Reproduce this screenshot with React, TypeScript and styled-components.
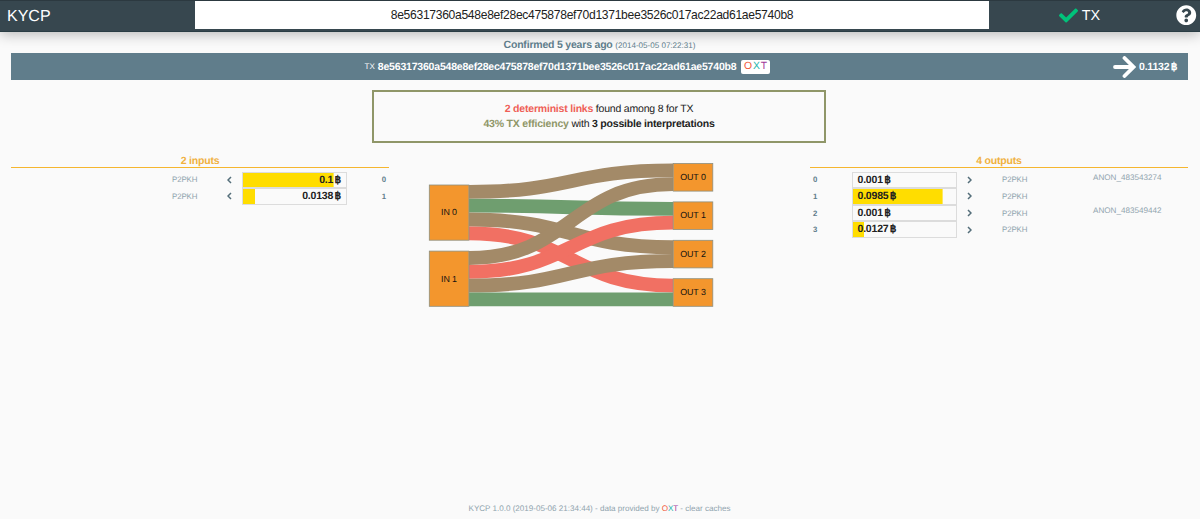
import styled, { createGlobalStyle } from "styled-components";
import { FaCheck, FaQuestionCircle } from "react-icons/fa";

const GlobalStyle = createGlobalStyle`
  * {
    box-sizing: border-box;
  }
  body {
    margin: 0;
    background-color: #fafafa;
    color: #212121;
    font-family: "Liberation Sans", Arial, sans-serif;
    font-size: 10.5px;
    letter-spacing: -0.2px;
    text-rendering: geometricPrecision;
  }
`;

const Page = styled.div`
  height: 519px;
  display: flex;
  flex-direction: column;
`;

const Header = styled.header`
  height: 32px;
  flex-shrink: 0;
  display: grid;
  grid-template-columns: 195px 794px 181px 1fr;
  background-color: #37474f;
  border-top: 1px solid #2c3940;
  border-bottom: 1px solid #2a3d44;
  box-shadow: 0 2px 14px rgba(0, 0, 0, 0.28);
  color: #fff;
  letter-spacing: 0;
`;

const Brand = styled.h1`
  margin: 0;
  padding-left: 7px;
  font-size: 16px;
  font-weight: 400;
  line-height: 31px;
`;

const Search = styled.input`
  width: 100%;
  height: 28px;
  padding: 0;
  border: 0;
  background-color: #fff;
  color: #212121;
  font-family: inherit;
  font-size: 12.1px;
  letter-spacing: -0.3px;
  text-align: center;
  outline: none;
`;

const Kind = styled.div`
  height: 29px;
  display: flex;
  align-items: center;
  justify-content: center;
  gap: 4px;
  font-size: 14.4px;
  svg {
    color: #00c27a;
    font-size: 19px;
  }
`;

const Help = styled.div`
  height: 28px;
  display: flex;
  align-items: center;
  padding-left: 6px;
  font-size: 20.5px;
`;

const Main = styled.main`
  flex: 1;
  padding: 6px 12px 0 11px;
`;

const Confirmed = styled.div`
  height: 15px;
  line-height: 15px;
  text-align: center;
  color: #607d8b;
  font-weight: 700;
  small {
    font-size: 8.1px;
    font-weight: 400;
    letter-spacing: -0.02px;
  }
`;

const TxBar = styled.div`
  height: 27px;
  display: grid;
  grid-template-columns: 11px 1fr 75px;
  align-items: center;
  background-color: #607d8b;
  color: #fff;
`;

const TxId = styled.div`
  grid-column: 2;
  display: flex;
  align-items: center;
  justify-content: center;
  height: 26px;
  font-weight: 700;
  small {
    margin-right: 3px;
    font-size: 8px;
    font-weight: 400;
    letter-spacing: 0;
  }
`;

const OxtBadge = styled.span`
  width: 29px;
  height: 14px;
  margin-left: 5px;
  border-radius: 2px;
  background-color: #fff;
  font-size: 10.4px;
  font-weight: 400;
  letter-spacing: 0.8px;
  line-height: 14px;
  text-align: center;
`;

const Letter = styled.span<{ $color: string }>`
  color: ${(props) => props.$color};
`;

const TxAmount = styled.div`
  display: flex;
  align-items: center;
  gap: 3px;
  font-weight: 700;
`;

const Coin = styled.span`
  margin-left: 1.4px;
`;

const Summary = styled.section`
  width: 454px;
  height: 53px;
  margin: 10px 0 0 361px;
  padding-top: 10px;
  border: 2px solid #8f9668;
  text-align: center;
  line-height: 15px;
`;

const Strong = styled.strong<{ $color?: string }>`
  color: ${(props) => props.$color || "inherit"};
`;

const Columns = styled.div`
  display: grid;
  grid-template-columns: 378px 421px 378px;
  margin-top: 11px;
`;

const ListTitle = styled.h2`
  height: 14px;
  margin: 0 0 3.6px;
  border-bottom: 1px solid #f5b62f;
  color: #f0b13f;
  font-size: 10.5px;
  font-weight: 700;
  line-height: 15px;
  text-align: center;
`;

const InputRow = styled.div`
  height: 16.6px;
  display: grid;
  grid-template-columns: 161px 55px 15px 105px 1fr;
  align-items: center;
`;

const OutputRow = styled.div`
  height: 16.6px;
  display: grid;
  grid-template-columns: 42px 105px 45px 91px 1fr;
  align-items: center;
`;

const Index = styled.span<{ $right?: boolean }>`
  padding: 0 3px;
  color: #607d8b;
  font-size: 7.8px;
  font-weight: 700;
  letter-spacing: 0;
  text-align: ${(props) => (props.$right ? "right" : "left")};
`;

const Muted = styled.span`
  color: #90a4ae;
  font-size: 7.9px;
  letter-spacing: -0.12px;
`;

const Address = styled(Muted)`
  padding-bottom: 5px;
  font-size: 8.1px;
  letter-spacing: 0;
`;

const Amount = styled.div<{ $right?: boolean }>`
  height: 16.6px;
  padding: 0 5px 0 4.5px;
  border: 1px solid #dcdcdc;
  background: linear-gradient(#ffdd00, #ffdd00) no-repeat;
  font-weight: 700;
  line-height: 15px;
  text-align: ${(props) => (props.$right ? "right" : "left")};
`;

const Chevron = styled.svg<{ $offset?: number }>`
  width: 5px;
  height: 8px;
  margin-left: ${(props) => props.$offset || 0}px;
  fill: none;
  stroke: #546e7a;
  stroke-width: 1.5;
`;

const Links = styled.svg`
  display: block;
  width: 421px;
  height: 160px;
  text {
    font-size: 8.9px;
    letter-spacing: -0.1px;
    text-anchor: middle;
    fill: #111;
  }
`;

const Footer = styled.footer`
  height: 22px;
  padding-right: 1px;
  color: #90a4ae;
  font-size: 8.1px;
  letter-spacing: -0.02px;
  line-height: 23px;
  text-align: center;
`;

const BROWN = "#a38a68";
const GREEN = "#6f9e6f";
const RED = "#f17063";

const inputs = [
  { amount: "0.1", ratio: 0.88 },
  { amount: "0.0138", ratio: 0.12 },
];

const outputs = [
  { amount: "0.001", ratio: 0, address: "ANON_483543274" },
  { amount: "0.0985", ratio: 0.87 },
  { amount: "0.001", ratio: 0, address: "ANON_483549442" },
  { amount: "0.0127", ratio: 0.11 },
];

// one row per input, one colour per output
const matrix = [
  [BROWN, GREEN, BROWN, RED],
  [BROWN, RED, BROWN, GREEN],
];

const LINK = 13.8;
const inY = (i: number) => 31 + i * 66.1;
const outY = (i: number) => 9.5 + i * 38.4;

function Oxt() {
  return (
    <>
      <Letter $color="#f1593a">O</Letter>
      <Letter $color="#1fb5ad">X</Letter>
      <Letter $color="#a23a9b">T</Letter>
    </>
  );
}

function Sankey() {
  return (
    <Links viewBox="0 0 421 160">
      {matrix.map((row, i) =>
        row.map((color, o) => {
          const y0 = inY(i) + LINK * (o + 0.5);
          const y1 = outY(o) + LINK * (i + 0.5);
          return (
            <path
              key={`${i}-${o}`}
              d={`M80,${y0}C182,${y0} 182,${y1} 284,${y1}`}
              fill="none"
              stroke={color}
              strokeWidth={LINK}
            />
          );
        })
      )}
      {matrix.map((_, i) => (
        <g key={i}>
          <rect
            x={40.3}
            y={inY(i)}
            width={39.6}
            height={LINK * 4}
            fill="#f3962d"
            stroke="#8c8f80"
            strokeWidth={0.8}
          />
          <text x={60} y={inY(i) + 30.4}>
            IN {i}
          </text>
        </g>
      ))}
      {outputs.map((_, i) => (
        <g key={i}>
          <rect
            x={284.2}
            y={outY(i)}
            width={39.6}
            height={LINK * 2}
            fill="#f3962d"
            stroke="#8c8f80"
            strokeWidth={0.8}
          />
          <text x={304} y={outY(i) + 16.5}>
            OUT {i}
          </text>
        </g>
      ))}
    </Links>
  );
}

export default function App() {
  return (
    <Page>
      <GlobalStyle />
      <Header>
        <Brand>KYCP</Brand>
        <Search
          readOnly
          value="8e56317360a548e8ef28ec475878ef70d1371bee3526c017ac22ad61ae5740b8"
        />
        <Kind>
          <FaCheck />
          TX
        </Kind>
        <Help>
          <FaQuestionCircle />
        </Help>
      </Header>
      <Main>
        <Confirmed>
          Confirmed 5 years ago <small>(2014-05-05 07:22:31)</small>
        </Confirmed>
        <TxBar>
          <TxId>
            <small>TX</small>
            8e56317360a548e8ef28ec475878ef70d1371bee3526c017ac22ad61ae5740b8
            <OxtBadge>
              <Oxt />
            </OxtBadge>
          </TxId>
          <TxAmount>
            <svg width="23" height="22" viewBox="0 0 23 22">
              <path
                d="M2 11H20M11.5 2L20.5 11L11.5 20"
                fill="none"
                stroke="#fff"
                strokeWidth="3.8"
                strokeLinecap="round"
              />
            </svg>
            <span>
              0.1132<Coin>฿</Coin>
            </span>
          </TxAmount>
        </TxBar>
        <Summary>
          <div>
            <Strong $color="#ef5f57">2 determinist links</Strong> found among 8
            for TX
          </div>
          <div>
            <Strong $color="#8f9668">43% TX efficiency</Strong> with{" "}
            <Strong>3 possible interpretations</Strong>
          </div>
        </Summary>
        <Columns>
          <div>
            <ListTitle>2 inputs</ListTitle>
            {inputs.map((input, i) => (
              <InputRow key={i}>
                <span />
                <Muted>P2PKH</Muted>
                <Chevron viewBox="0 0 5 8">
                  <path d="M4 1L1 4L4 7" />
                </Chevron>
                <Amount
                  $right
                  style={{ backgroundSize: `${input.ratio * 100}% 100%` }}
                >
                  {input.amount}
                  <Coin>฿</Coin>
                </Amount>
                <Index $right>{i}</Index>
              </InputRow>
            ))}
          </div>
          <Sankey />
          <div>
            <ListTitle>4 outputs</ListTitle>
            {outputs.map((output, i) => (
              <OutputRow key={i}>
                <Index>{i}</Index>
                <Amount style={{ backgroundSize: `${output.ratio * 100}% 100%` }}>
                  {output.amount}
                  <Coin>฿</Coin>
                </Amount>
                <Chevron viewBox="0 0 5 8" $offset={10}>
                  <path d="M1 1L4 4L1 7" />
                </Chevron>
                <Muted>P2PKH</Muted>
                <Address>{output.address}</Address>
              </OutputRow>
            ))}
          </div>
        </Columns>
      </Main>
      <Footer>
        KYCP 1.0.0 (2019-05-06 21:34:44) - data provided by <Oxt /> - clear
        caches
      </Footer>
    </Page>
  );
}
